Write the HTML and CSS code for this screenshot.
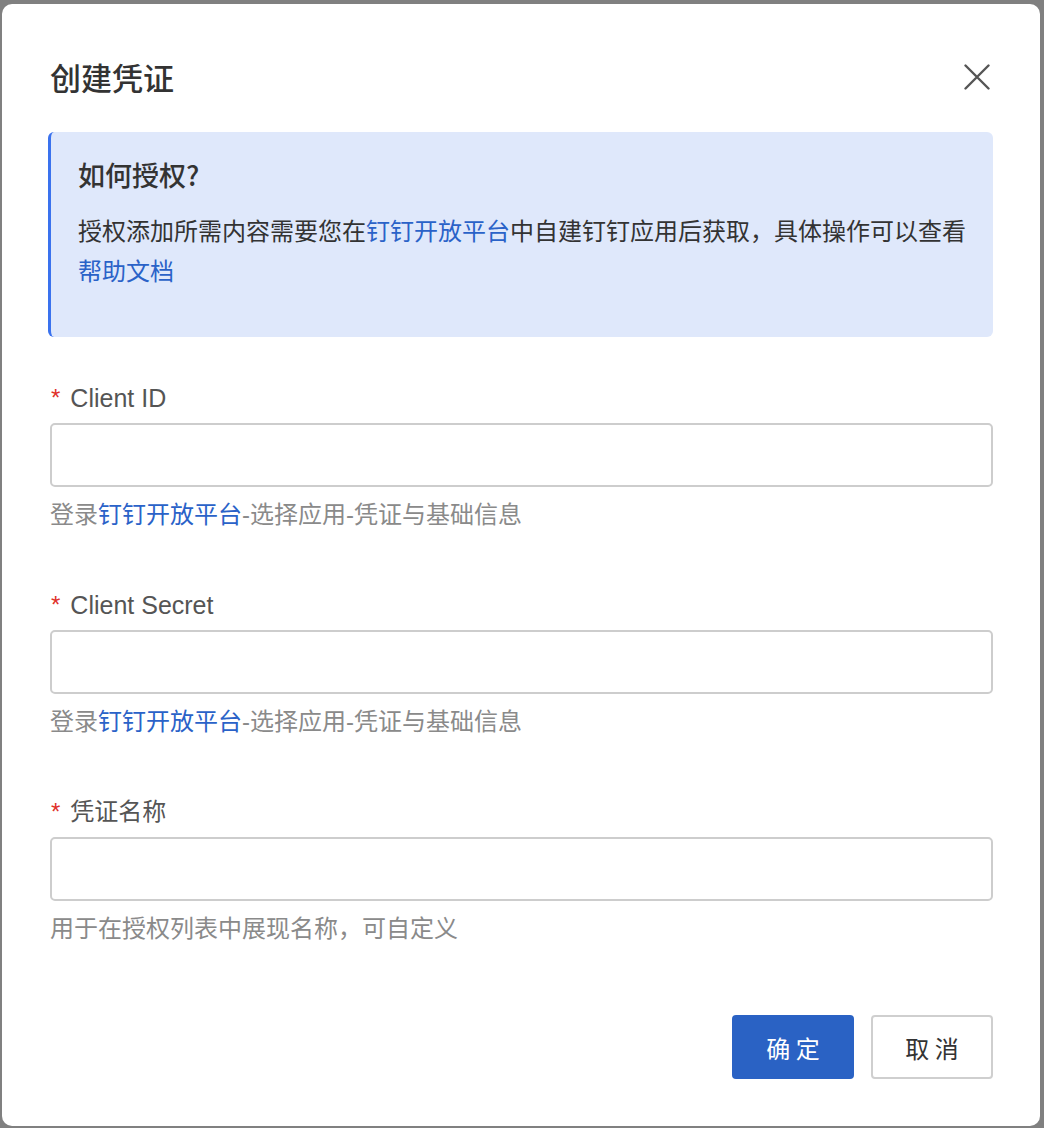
FILE: index.html
```html
<!DOCTYPE html>
<html lang="zh-CN">
<head>
<meta charset="utf-8">
<title>创建凭证</title>
<link rel="stylesheet" href="styles.css">
</head>
<body>
<div class="dialog">
  <div class="header">
    <h1 class="title">创建凭证</h1>
    <button class="close" aria-label="关闭">
      <svg width="26" height="26" viewBox="0 0 26 26"><path d="M1.5 1.5 L24.5 24.5 M24.5 1.5 L1.5 24.5" stroke="#555" stroke-width="2.4" stroke-linecap="round" fill="none"/></svg>
    </button>
  </div>
  <div class="notice">
    <div class="notice-title">如何授权?</div>
    <p class="notice-text">授权添加所需内容需要您在<a class="link" href="#">钉钉开放平台</a>中自建钉钉应用后获取，具体操作可以查看<a class="link" href="#">帮助文档</a></p>
  </div>
  <form class="form">
    <div class="field">
      <label class="label"><span class="req">*</span><span class="latin">Client ID</span></label>
      <input class="input" type="text">
      <div class="help">登录<a class="link" href="#">钉钉开放平台</a>-选择应用-凭证与基础信息</div>
    </div>
    <div class="field">
      <label class="label"><span class="req">*</span><span class="latin">Client Secret</span></label>
      <input class="input" type="text">
      <div class="help">登录<a class="link" href="#">钉钉开放平台</a>-选择应用-凭证与基础信息</div>
    </div>
    <div class="field">
      <label class="label"><span class="req">*</span>凭证名称</label>
      <input class="input" type="text">
      <div class="help">用于在授权列表中展现名称，可自定义</div>
    </div>
  </form>
  <div class="footer">
    <button class="btn btn-primary">确 定</button>
    <button class="btn btn-default">取 消</button>
  </div>
</div>
</body>
</html>
```

FILE: styles.css
```css
html, body {
  margin: 0;
  padding: 0;
  background: #808080;
}
body {
  padding: 4px 4px 2px 2px;
  font-family: "Liberation Sans", "Noto Sans CJK SC", sans-serif;
  color: #333;
}
.dialog {
  width: 1038px;
  height: 1122px;
  box-sizing: border-box;
  background: #fff;
  border-radius: 10px;
  padding: 53px 47px 47px 46px;
  display: flex;
  flex-direction: column;
}
.header {
  display: flex;
  align-items: center;
  justify-content: space-between;
  height: 40px;
  padding-left: 2px;
}
.title {
  margin: 0;
  font-size: 31px;
  line-height: 40px;
  font-weight: 500;
  color: #333;
  font-family: "Noto Sans CJK SC", sans-serif;
}
.close {
  border: 0;
  background: transparent;
  padding: 0;
  margin-right: 3px;
  width: 26px;
  height: 26px;
  display: flex;
}
.notice {
  margin-top: 35px;
  background: #dfe8fb;
  border-left: 3px solid #3a72ee;
  border-radius: 6px;
  padding: 25px 16px 45px 27px;
  height: 205px;
  box-sizing: border-box;
}
.notice-title {
  font-family: "Noto Sans CJK SC", sans-serif;
  font-size: 27px;
  line-height: 36px;
  font-weight: 500;
  color: #333;
}
.notice-text {
  margin: 19px 0 0 0;
  font-size: 24px;
  line-height: 40px;
  color: #333;
}
.link {
  color: #2a62c8;
  text-decoration: none;
}
.form {
  margin-top: 44px;
  display: flex;
  flex-direction: column;
  gap: 55px;
}
.field {
  display: flex;
  flex-direction: column;
}
.label {
  display: flex;
  align-items: center;
  height: 34px;
  font-size: 24px;
  line-height: 34px;
  color: #555;
  padding-left: 3px;
}
.latin {
  font-size: 25px;
}
.req {
  color: #e0302a;
  margin-right: 10px;
}
.input {
  margin-top: 8px;
  height: 64px;
  box-sizing: border-box;
  border: 2px solid #cdcdcd;
  border-radius: 5px;
  margin-left: 2px;
  font-size: 24px;
  padding: 0 16px;
  outline: none;
}
.help {
  margin-top: 10px;
  font-size: 24px;
  line-height: 36px;
  color: #8a8a8a;
  padding-left: 2px;
}
.footer {
  margin-top: auto;
  display: flex;
  justify-content: flex-end;
  gap: 17px;
}
.btn {
  width: 122px;
  height: 64px;
  box-sizing: border-box;
  font-family: "Noto Sans CJK SC", sans-serif;
  font-size: 24px;
  border-radius: 4px;
  cursor: pointer;
}
.btn-primary {
  background: #2a62c4;
  color: #fff;
  border: 0;
}
.btn-default {
  background: #fff;
  color: #333;
  border: 2px solid #cfcfcf;
}
```
